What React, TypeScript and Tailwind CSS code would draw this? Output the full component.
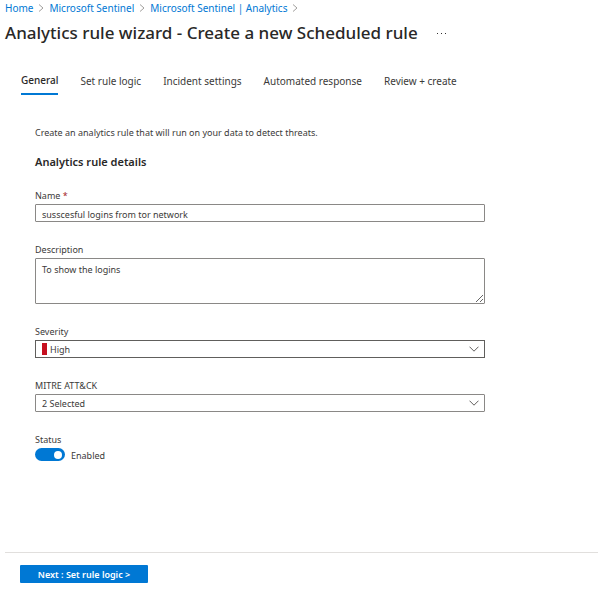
import { useState } from "react";
import type { ReactNode } from "react";

const crumbs = ["Home", "Microsoft Sentinel", "Microsoft Sentinel | Analytics"];
const tabs = ["General", "Set rule logic", "Incident settings", "Automated response", "Review + create"];

function CrumbChevron() {
  return (
    <svg className="h-2 w-4 text-[#a19f9d]" viewBox="0 0 16 8" fill="none" stroke="currentColor" aria-hidden="true">
      <path d="M6 0.5 L10 4 L6 7.5" />
    </svg>
  );
}

function SelectChevron() {
  return (
    <svg
      className="pointer-events-none absolute top-1/2 right-[5px] h-[6px] w-[10px] -translate-y-1/2 text-[#605e5c]"
      viewBox="0 0 10 6"
      fill="none"
      stroke="currentColor"
      aria-hidden="true"
    >
      <path d="M0.5 0.7 L5 5.2 L9.5 0.7" />
    </svg>
  );
}

function Field({ id, label, required, children }: { id: string; label: string; required?: boolean; children: ReactNode }) {
  return (
    <div className="flex flex-col">
      <label htmlFor={id} className="leading-4">
        {label}
        {required && <span className="text-[#a4262c]"> *</span>}
      </label>
      {children}
    </div>
  );
}

export default function App() {
  const [tab, setTab] = useState("General");
  const [name, setName] = useState("susscesful logins from tor network");
  const [description, setDescription] = useState("To show the logins");
  const [enabled, setEnabled] = useState(true);

  return (
    <div className="min-h-screen bg-white pl-[5px] font-['Noto_Sans',sans-serif] text-[9px] text-[#3b3a39]">
      <nav aria-label="Breadcrumb" className="flex h-4 items-center text-[10px] leading-4 text-[#0078d4]">
        {crumbs.map((crumb) => (
          <span key={crumb} className="flex items-center whitespace-nowrap">
            <a href="#">{crumb}</a>
            <CrumbChevron />
          </span>
        ))}
      </nav>

      <header className="mt-[5px] flex items-center gap-[18px]">
        <h1 className="text-[17px] leading-6 font-medium whitespace-nowrap text-[#292827]">
          Analytics rule wizard - Create a new Scheduled rule
        </h1>
        <button type="button" aria-label="More options" className="flex h-4 w-3 items-center justify-center gap-[3px]">
          <span className="size-px bg-[#323130]" />
          <span className="size-px bg-[#323130]" />
          <span className="size-px bg-[#323130]" />
        </button>
      </header>

      <div role="tablist" className="mt-[25px] flex gap-[22px] pl-4 text-[10px] leading-4">
        {tabs.map((item) => (
          <button
            key={item}
            type="button"
            role="tab"
            aria-selected={tab === item}
            onClick={() => setTab(item)}
            className={
              tab === item
                ? "h-[25px] border-b-2 border-[#0078d4] pt-[2px] pb-[5px] font-medium whitespace-nowrap text-[#292827]"
                : "h-[25px] border-b-2 border-transparent pt-[3px] pb-1 whitespace-nowrap"
            }
          >
            {item}
          </button>
        ))}
      </div>

      <main className="mt-[30px] pr-[30px] pl-[30px]">
        <p className="leading-4">Create an analytics rule that will run on your data to detect threats.</p>
        <h2 className="mt-[13px] text-[11px] leading-4 font-semibold text-[#292827]">Analytics rule details</h2>

        <form className="mt-[18px] flex max-w-[450px] flex-col gap-5">
          <Field id="name" label="Name" required>
            <input
              id="name"
              value={name}
              onChange={(e) => setName(e.target.value)}
              className="h-[18px] w-full rounded-[1px] border border-[#8a8886] px-[6px] pt-[2px] outline-none"
            />
          </Field>
          <Field id="description" label="Description">
            <textarea
              id="description"
              value={description}
              onChange={(e) => setDescription(e.target.value)}
              className="h-[46px] w-full resize-y rounded-[1px] border border-[#8a8886] px-[6px] py-[5px] leading-3 outline-none"
            />
          </Field>
          <Field id="severity" label="Severity">
            <div className="relative flex h-[18px] items-center gap-[3px] border border-[#605e5c] pl-[6px]">
              <span className="h-3 w-[5px] bg-[#c50f1f]" />
              <select id="severity" className="h-4 flex-1 appearance-none bg-transparent pt-px outline-none">
                <option>High</option>
              </select>
              <SelectChevron />
            </div>
          </Field>
          <Field id="mitre" label="MITRE ATT&CK">
            <div className="relative flex h-[18px] items-center rounded-[1px] border border-[#8a8886] pl-[6px]">
              <select id="mitre" className="h-4 flex-1 appearance-none bg-transparent pt-px outline-none">
                <option>2 Selected</option>
              </select>
              <SelectChevron />
            </div>
          </Field>
          <Field id="status" label="Status">
            <div className="flex items-start gap-[6px]">
              <input
                id="status"
                type="checkbox"
                role="switch"
                checked={enabled}
                onChange={(e) => setEnabled(e.target.checked)}
                className="flex h-[13px] w-[30px] appearance-none items-center rounded-full bg-[#8a8886] px-[3px] before:size-2 before:rounded-full before:bg-white checked:justify-end checked:bg-[#0078d4]"
              />
              <span className="leading-4">{enabled ? "Enabled" : "Disabled"}</span>
            </div>
          </Field>
        </form>
      </main>

      <footer className="mt-[88px] border-t border-[#e1dfdd] px-[15px] pt-3">
        <button
          type="button"
          className="h-[18px] min-w-32 rounded-[1px] bg-[#0078d4] px-4 pt-px font-semibold text-white"
        >
          Next : Set rule logic &gt;
        </button>
      </footer>
    </div>
  );
}
